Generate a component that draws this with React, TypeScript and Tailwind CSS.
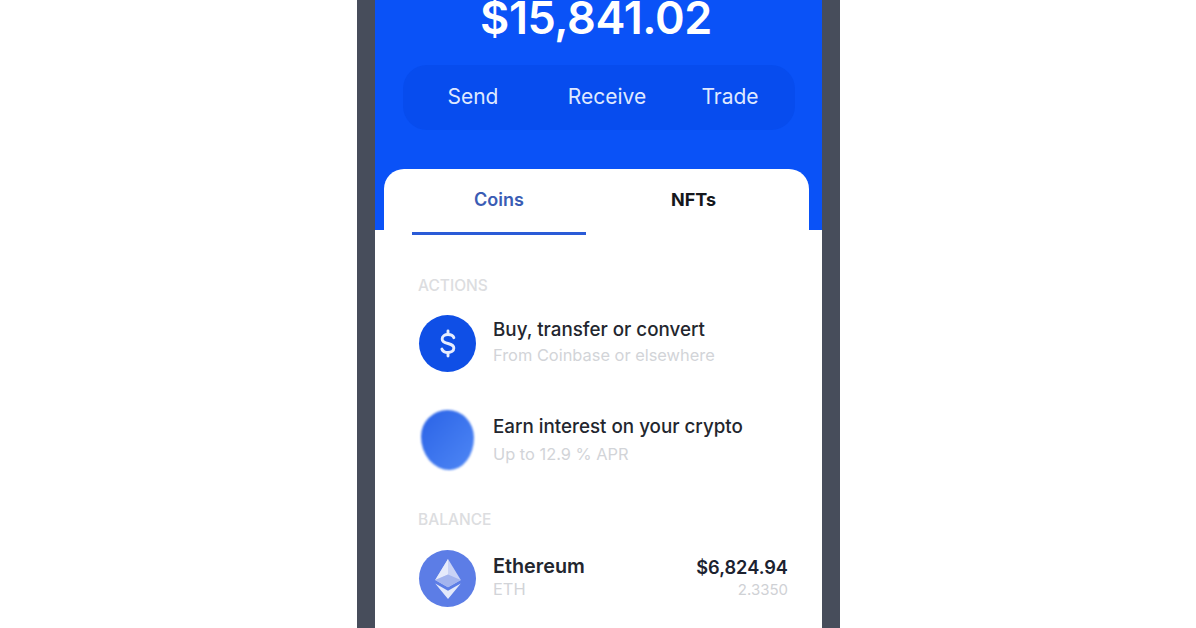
const sans = "font-['Inter','Liberation_Sans',sans-serif]";

function Row({ icon, title, sub, right, rightSub, titleClass = "", textClass = "" }: { icon: React.ReactNode; title: string; sub: string; right?: string; rightSub?: string; titleClass?: string; textClass?: string }) {
  return (
    <div className="flex items-center h-[57px]">
      <div className="w-[57px] h-[57px] shrink-0 flex items-center justify-center">{icon}</div>
      <div className={`ml-[17px] flex-1 min-w-0 flex flex-col ${textClass}`}>
        <div className={`text-[18.8px] leading-[24px] text-[#23262e] font-medium ${titleClass}`}>{title}</div>
        <div className="text-[16.4px] leading-[20px] text-[#d2d4d8]">{sub}</div>
      </div>
      {right && (
        <div className="text-right pb-[2px]">
          <div className="text-[18.2px] leading-[24px] text-[#1c2230] font-semibold">{right}</div>
          <div className="mt-[1px] text-[15px] leading-[20px] text-[#cfd1d5]">{rightSub}</div>
        </div>
      )}
    </div>
  );
}

export default function App() {
  return (
    <div className={`w-[1196px] h-[628px] overflow-hidden bg-white flex pl-[357px] ${sans}`}>
      <div className="w-[483px] h-[628px] border-x-[18px] border-[#474d5b] bg-white flex flex-col">
        <div className="h-[230px] bg-[#0a52f7] pl-[9px] pr-[13px] flex flex-col shrink-0">
          <div className="h-[36px] shrink-0 -ml-[1px] flex items-center justify-center text-white text-[45px] leading-[36px] font-semibold tracking-[-0.4px]">$15,841.02</div>
          <div className="mt-[29px] shrink-0 ml-[19px] w-[392px] h-[65px] rounded-[24px] bg-[#074cee] flex items-center text-[#dfe8ff] text-[21px] font-normal pb-[2px]">
            <div className="w-[140px] text-center">Send</div>
            <div className="w-[128px] text-center">Receive</div>
            <div className="w-[118px] text-center">Trade</div>
          </div>
          <div className="mt-[39px] h-[66px] shrink-0 bg-white rounded-t-[20px] pl-[28px] pr-[8px] flex">
            <div className="w-[174px] h-[66px] border-b-[3px] border-[#2a5bd7] flex items-start justify-center pt-[19px] text-[#3a5cb4] text-[18px] leading-[24px] font-semibold">Coins</div>
            <div className="flex-1 flex items-start justify-center pt-[19px] text-[#15171c] text-[18px] leading-[24px] font-bold">NFTs</div>
          </div>
        </div>
        <div className="pl-[44px] pr-[34px] flex flex-col flex-1">
          <div className="mt-[47px] -ml-[1px] text-[15.5px] leading-[18px] font-medium text-[#dcdde0]">ACTIONS</div>
          <div className="mt-[20px]">
            <Row
              icon={
                <div className="w-[57px] h-[57px] rounded-full bg-[#0f4fe6] flex items-center justify-center">
                  <svg width="18" height="29" viewBox="0 0 20 32" fill="none" stroke="#e6edff" strokeWidth="3.2" strokeLinecap="round">
                    <path d="M10 2v4M10 26v4" />
                    <path d="M16.5 9.5C15.500 7 13 6 10 6 6.500 6 3.500 7.800 3.500 11c0 3 3 4.200 6.500 5 3.500.9 6.500 2 6.500 5 0 3.200-3 5-6.500 5-3 0-5.700-1.200-6.800-3.800" />
                  </svg>
                </div>
              }
              title="Buy, transfer or convert"
              textClass="pb-[5px] gap-[3px]"
              sub="From Coinbase or elsewhere"
            />
          </div>
          <div className="mt-[39px]">
            <Row
              icon={
                <div className="w-[53px] h-[60px] rounded-[50%_50%_46%_54%/44%_46%_54%_56%] bg-gradient-to-br from-[#2a62e6] to-[#4f87f5] blur-[1px]" />
              }
              title="Earn interest on your crypto"
              textClass="pb-[1px] gap-[5px]"
              sub="Up to 12.9 % APR"
            />
          </div>
          <div className="mt-[43px] -ml-[1px] text-[15.5px] leading-[18px] font-medium text-[#dcdde0]">BALANCE</div>
          <div className="mt-[21px]">
            <Row
              icon={
                <div className="w-[57px] h-[57px] rounded-full bg-[#5c7de6] flex items-center justify-center">
                  <svg width="28" height="42" viewBox="0 0 30 46">
                    <path d="M15 1 29 24 15 32 1 24Z" fill="#c9d3f6" />
                    <path d="M15 1 1 24 15 18Z" fill="#e6ebfb" />
                    <path d="M15 18 1 24 15 32 29 24Z" fill="#a3b4ee" />
                    <path d="M15 45 1 28 15 36 29 28Z" fill="#e3e9fb" />
                  </svg>
                </div>
              }
              title="Ethereum"
              titleClass="font-semibold !text-[19.8px]"
              textClass="pb-[4px] gap-[1px]"
              sub="ETH"
              right="$6,824.94"
              rightSub="2.3350"
            />
          </div>
        </div>
      </div>
    </div>
  );
}
